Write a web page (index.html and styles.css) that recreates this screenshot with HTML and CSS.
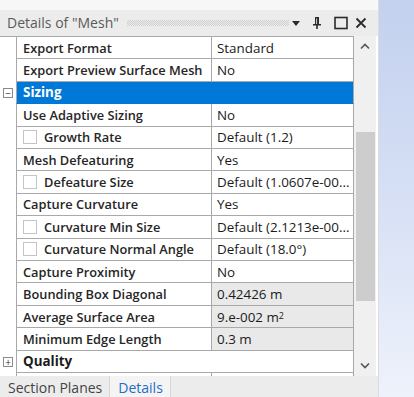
FILE: index.html
```html
<!DOCTYPE html>
<html lang="en">
  <head>
    <meta charset="UTF-8" />
    <title>Details of "Mesh"</title>
    <link rel="stylesheet" href="styles.css">
  </head>
  <body>
    <div class="panel">
      <div class="top-strip"></div>

      <div class="titlebar">
        <span class="title">Details of "Mesh"</span>
        <span class="grip"></span>
        <svg class="tb-icon menu" width="10" height="10" viewBox="0 0 10 10">
          <path d="M1 3 H9 L5 8 Z" fill="#2b2b2b" />
        </svg>
        <svg class="tb-icon pin" width="10" height="14" viewBox="0 0 10 14">
          <path d="M3 1 H7 V8 H9 V9.5 H5.8 V13 H4.2 V9.5 H1 V8 H3 Z" fill="#2b2b2b" />
          <path d="M4.6 2.5 V8" stroke="#fff" stroke-width="0.8" />
        </svg>
        <svg class="tb-icon maximize" width="14" height="14" viewBox="0 0 14 14">
          <rect x="1" y="1.5" width="12" height="11" fill="none" stroke="#2b2b2b" stroke-width="1.6" />
        </svg>
        <svg class="tb-icon close" width="12" height="12" viewBox="0 0 12 12">
          <path d="M1.5 1.5 L10.5 10.5 M10.5 1.5 L1.5 10.5" stroke="#2b2b2b" stroke-width="1.8" />
        </svg>
      </div>

      <div class="grid-area">
        <div class="details">
          <div class="gutter"></div>
          <div class="cell name">Export Format</div>
          <div class="cell value">Standard</div>

          <div class="gutter"></div>
          <div class="cell name">Export Preview Surface Mesh</div>
          <div class="cell value">No</div>

          <div class="gutter"><span class="toggle">&minus;</span></div>
          <div class="cell group selected">Sizing</div>

          <div class="gutter"></div>
          <div class="cell name">Use Adaptive Sizing</div>
          <div class="cell value">No</div>

          <div class="gutter"></div>
          <div class="cell name"><span class="check"></span>Growth Rate</div>
          <div class="cell value">Default (1.2)</div>

          <div class="gutter"></div>
          <div class="cell name">Mesh Defeaturing</div>
          <div class="cell value">Yes</div>

          <div class="gutter"></div>
          <div class="cell name"><span class="check"></span>Defeature Size</div>
          <div class="cell value">Default (1.0607e-00...</div>

          <div class="gutter"></div>
          <div class="cell name">Capture Curvature</div>
          <div class="cell value">Yes</div>

          <div class="gutter"></div>
          <div class="cell name"><span class="check"></span>Curvature Min Size</div>
          <div class="cell value">Default (2.1213e-00...</div>

          <div class="gutter"></div>
          <div class="cell name"><span class="check"></span>Curvature Normal Angle</div>
          <div class="cell value">Default (18.0°)</div>

          <div class="gutter"></div>
          <div class="cell name">Capture Proximity</div>
          <div class="cell value">No</div>

          <div class="gutter"></div>
          <div class="cell name">Bounding Box Diagonal</div>
          <div class="cell value readonly">0.42426 m</div>

          <div class="gutter"></div>
          <div class="cell name">Average Surface Area</div>
          <div class="cell value readonly">9.e-002 m<sup>2</sup></div>

          <div class="gutter"></div>
          <div class="cell name">Minimum Edge Length</div>
          <div class="cell value readonly">0.3 m</div>

          <div class="gutter"><span class="toggle">+</span></div>
          <div class="cell group">Quality</div>

          <div class="gutter"></div>
          <div class="cell name"></div>
          <div class="cell value"></div>
        </div>

        <div class="scrollbar">
          <svg class="arrow" width="10" height="7" viewBox="0 0 10 7">
            <path d="M1 5.5 L5 1.5 L9 5.5" fill="none" stroke="#555" stroke-width="1.6" />
          </svg>
          <div class="track">
            <div class="thumb"></div>
          </div>
          <svg class="arrow" width="10" height="7" viewBox="0 0 10 7">
            <path d="M1 1.5 L5 5.5 L9 1.5" fill="none" stroke="#555" stroke-width="1.6" />
          </svg>
        </div>
      </div>

      <div class="tabs">
        <div class="tab">Section Planes</div>
        <div class="tab active">Details</div>
      </div>
    </div>

    <div class="desktop"></div>
  </body>
</html>
```

FILE: styles.css
```css
body {
  margin: 0;
  display: flex;
  height: 397px;
  overflow: hidden;
  font-family: "Open Sans", "Noto Sans", sans-serif;
  color: #1b1b1b;
}

.panel {
  display: flex;
  flex-direction: column;
  width: 378px;
  border-right: 1px solid #dcdcdc;
  background-color: #f0f0f0;
}

.top-strip {
  height: 10px;
  background-color: #f7f7f7;
}

.titlebar {
  display: flex;
  align-items: center;
  height: 26px;
  padding: 0 11px 0 7px;
  background-color: #ececec;
}

.title {
  font-size: 14px;
  color: #5a5a5a;
  white-space: nowrap;
}

.grip {
  flex: 1;
  height: 6px;
  margin: 0 2px 0 8px;
  background: repeating-conic-gradient(#cfcfcf 0 25%, transparent 0 50%) 0 0 / 2px 2px;
}

.tb-icon {
  display: block;
  flex-shrink: 0;
}

.tb-icon.pin {
  margin-left: 11px;
}

.tb-icon.maximize {
  margin-left: 12px;
}

.tb-icon.close {
  margin-left: 7px;
}

.grid-area {
  display: flex;
  height: 342px;
  overflow: hidden;
  background-color: #ffffff;
}

.details {
  display: grid;
  grid-template-columns: 16px 195px 143px;
  grid-auto-rows: 22.43px;
  align-content: start;
  border-top: 1px solid #a9a9a9;
  font-size: 13.4px;
}

.gutter {
  display: flex;
  align-items: center;
  padding-left: 3px;
  background-color: #ffffff;
}

.toggle {
  display: flex;
  align-items: center;
  justify-content: center;
  width: 8px;
  height: 8px;
  border: 1px solid #8a8a8a;
  font-size: 10px;
  line-height: 1;
  color: #333;
  background-color: #fff;
}

.cell {
  display: flex;
  align-items: center;
  padding-left: 6px;
  border-bottom: 1px solid #a9a9a9;
  border-left: 1px solid #a9a9a9;
  white-space: nowrap;
  overflow: hidden;
  background-color: #ffffff;
}

.name {
  font-size: 12.8px;
  font-weight: 600;
  color: #262626;
}

.value {
  border-right: 1px solid #a9a9a9;
  padding-left: 5px;
}

.value.readonly {
  background-color: #e9e9e9;
}

.value sup {
  font-size: 9px;
  align-self: flex-start;
  margin-top: 3px;
}

.group {
  grid-column: span 2;
  font-size: 13.4px;
  font-weight: 700;
  border-right: 1px solid #a9a9a9;
}

.group.selected {
  background-color: #0078d7;
  color: #ffffff;
  border-bottom-color: #0078d7;
}

.check {
  width: 12px;
  height: 12px;
  margin-right: 7px;
  border: 1px solid #c4c4c4;
  background-color: #fff;
  flex-shrink: 0;
}

.scrollbar {
  display: flex;
  flex-direction: column;
  align-items: center;
  width: 22px;
  background-color: #f0f0f0;
}

.arrow {
  display: block;
  margin: 7px 0;
}

.track {
  flex: 1;
  width: 100%;
  padding: 75px 1px 0 2px;
  box-sizing: border-box;
}

.thumb {
  height: 169px;
  background-color: #cdcdcd;
}

.tabs {
  display: flex;
  flex: 1;
  font-size: 14px;
  background-color: #ececec;
}

.tab {
  padding: 2px 7px 0 8px;
  border-right: 1px solid #d6d6d6;
  color: #444;
}

.tab.active {
  color: #1c6ec7;
  background-color: #f4f4f4;
}

.desktop {
  flex: 1;
  background: linear-gradient(to bottom, #c3d1ef 0%, #d4def4 45%, #eef2fb 100%);
}
```
